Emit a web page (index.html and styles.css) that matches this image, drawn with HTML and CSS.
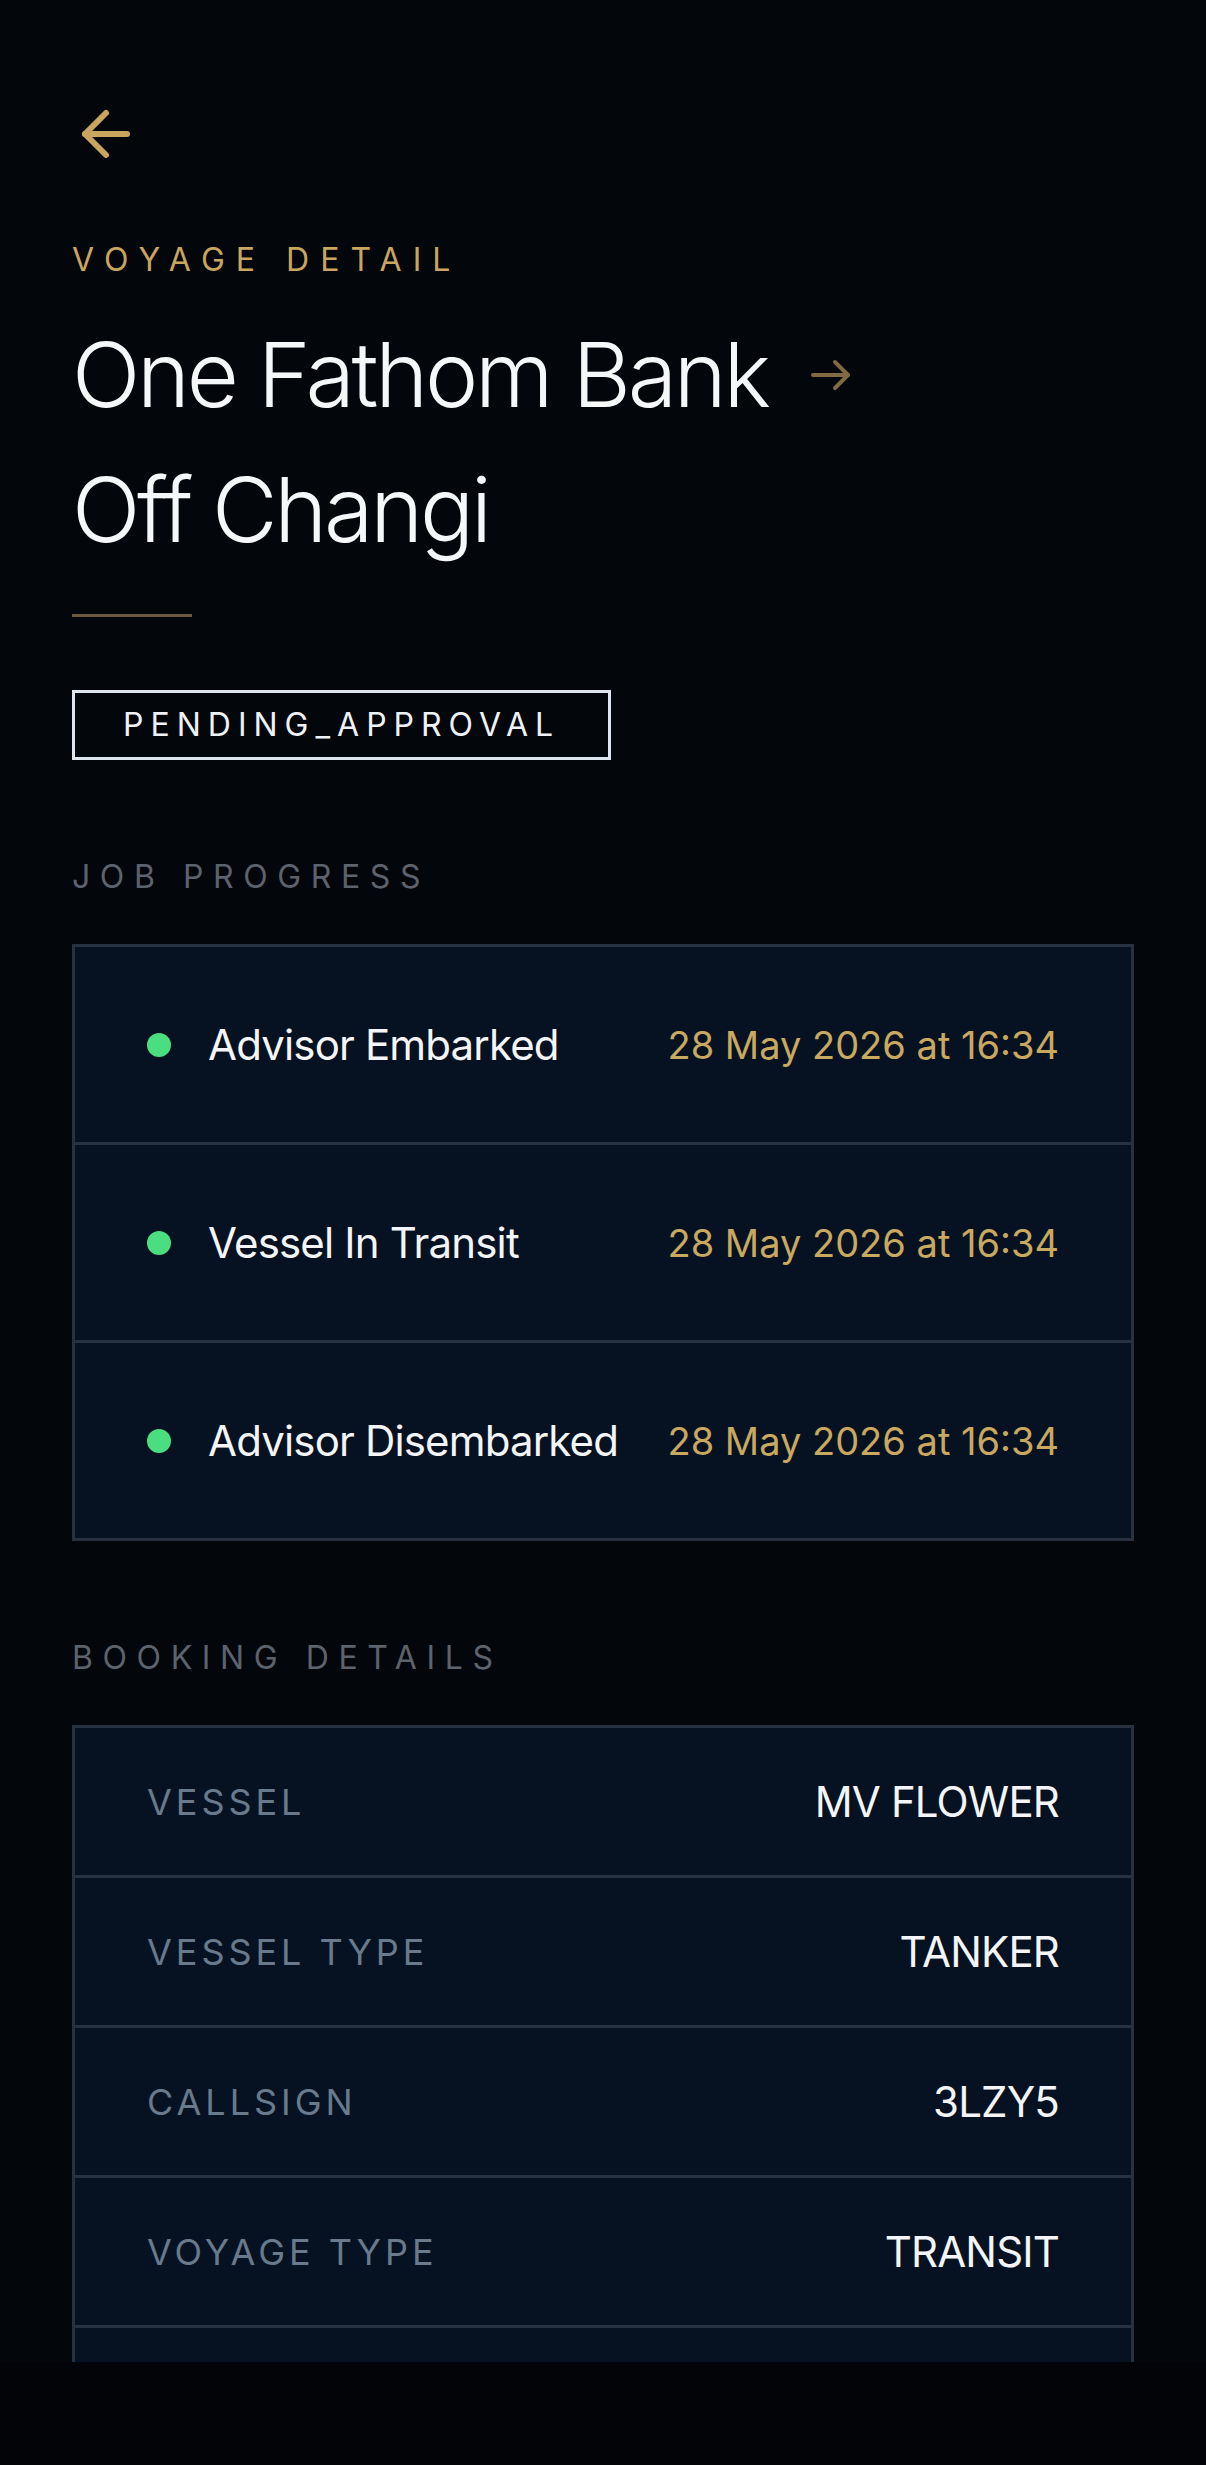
FILE: index.html
```html
<!DOCTYPE html>
<html>
<head>
  <meta charset="utf-8">
  <title>Voyage Detail</title>
  <link rel="stylesheet" href="styles.css">
</head>
<body>
  <div class="screen">
    <div class="scroll">
      <button class="back" aria-label="Back">
        <svg viewBox="0 0 24 24" width="72" height="72" fill="none" stroke="currentColor" stroke-width="2" stroke-linecap="round" stroke-linejoin="round">
          <path d="m12 19-7-7 7-7"/>
          <path d="M19 12H5"/>
        </svg>
      </button>

      <section class="hero">
        <p class="eyebrow gold">Voyage Detail</p>
        <h1 class="title">One Fathom Bank<svg class="route-arrow" viewBox="0 0 40 32" width="40" height="32" fill="none" stroke="currentColor" stroke-width="4" stroke-linecap="round" stroke-linejoin="round"><path d="M2 16H37"/><path d="M24 3l13 13-13 13"/></svg><br>Off Changi</h1>
        <div class="rule"></div>
        <span class="status">PENDING_APPROVAL</span>
      </section>

      <section class="block">
        <h2 class="eyebrow muted">Job Progress</h2>
        <ul class="card">
          <li class="step">
            <span class="dot"></span>
            <span class="step-name">Advisor Embarked</span>
            <span class="step-time">28 May 2026 at 16:34</span>
          </li>
          <li class="step">
            <span class="dot"></span>
            <span class="step-name">Vessel In Transit</span>
            <span class="step-time">28 May 2026 at 16:34</span>
          </li>
          <li class="step">
            <span class="dot"></span>
            <span class="step-name">Advisor Disembarked</span>
            <span class="step-time">28 May 2026 at 16:34</span>
          </li>
        </ul>
      </section>

      <section class="block">
        <h2 class="eyebrow muted">Booking Details</h2>
        <ul class="card">
          <li class="row">
            <span class="row-label">Vessel</span>
            <span class="row-value">MV FLOWER</span>
          </li>
          <li class="row">
            <span class="row-label">Vessel Type</span>
            <span class="row-value">TANKER</span>
          </li>
          <li class="row">
            <span class="row-label">Callsign</span>
            <span class="row-value">3LZY5</span>
          </li>
          <li class="row">
            <span class="row-label">Voyage Type</span>
            <span class="row-value">TRANSIT</span>
          </li>
          <!-- next row is scrolled out of view -->
          <li class="row"></li>
        </ul>
      </section>
    </div>
    <div class="home-area"></div>
  </div>
</body>
</html>
```

FILE: styles.css
```css
body {
  margin: 0;
  background-color: #03060a;
  font-family: Inter, "Noto Sans", sans-serif;
  color: #f3f5f8;
}

.screen {
  height: 2465px;
  display: flex;
  flex-direction: column;
}

.scroll {
  height: 2362px;
  overflow: hidden;
  padding: 0 72px;
  box-sizing: border-box;
}

.home-area {
  flex: 1;
  background-color: #020407;
}

.back {
  display: block;
  margin: 98px 0 0 -2px;
  padding: 0;
  border: none;
  background: none;
  color: #c9a55e;
  cursor: pointer;
}

.back svg {
  display: block;
}

/* headings */
.eyebrow {
  margin: 0;
  font-size: 32px;
  line-height: 40px;
  font-weight: 400;
  letter-spacing: 0.3em;
  text-transform: uppercase;
}

.gold {
  color: #c9a55e;
  letter-spacing: 0.345em;
}

.muted {
  color: #5c636c;
}

.hero {
  display: flex;
  flex-direction: column;
  align-items: flex-start;
  margin-top: 70px;
}

.title {
  margin: 27px 0 0;
  font-size: 90px;
  line-height: 135px;
  font-weight: 300;
  letter-spacing: -0.036em;
  color: #f6f7f9;
}

.route-arrow {
  color: #7f6a42;
  margin-left: 43px;
  vertical-align: 16px;
}

.rule {
  width: 120px;
  height: 3px;
  margin-top: 37px;
  background-color: #6b5a3d;
}

.status {
  margin-top: 73px;
  padding: 12px 48px 12px 48px;
  border: 3px solid #dde5ee;
  font-size: 32px;
  line-height: 40px;
  letter-spacing: 7px;
  color: #eef2f7;
}

.block {
  margin-top: 97px;
}

.block .eyebrow {
  margin-bottom: 47px;
}

/* cards */
.card {
  list-style: none;
  margin: 0;
  padding: 0;
  background-color: #061221;
  border: 3px solid #27313f;
}

.step {
  display: flex;
  align-items: center;
  height: 195px;
  padding: 0 72px;
  border-bottom: 3px solid #27313f;
}

.step:last-child {
  border-bottom: none;
}

.dot {
  width: 24px;
  height: 24px;
  border-radius: 50%;
  background-color: #4ade80;
  margin-right: 37px;
  flex-shrink: 0;
}

.step-name {
  flex: 1;
  font-size: 42px;
  letter-spacing: -0.02em;
  color: #f3f5f8;
}

.step-time {
  font-size: 38px;
  color: #c9a860;
}

.row {
  display: flex;
  justify-content: space-between;
  align-items: center;
  height: 147px;
  padding: 0 72px;
  border-bottom: 3px solid #27313f;
}

.row-label {
  font-size: 36px;
  letter-spacing: 0.11em;
  text-transform: uppercase;
  color: #687a8c;
}

.row-value {
  font-size: 42px;
  letter-spacing: -0.02em;
  color: #f3f5f8;
}
```
